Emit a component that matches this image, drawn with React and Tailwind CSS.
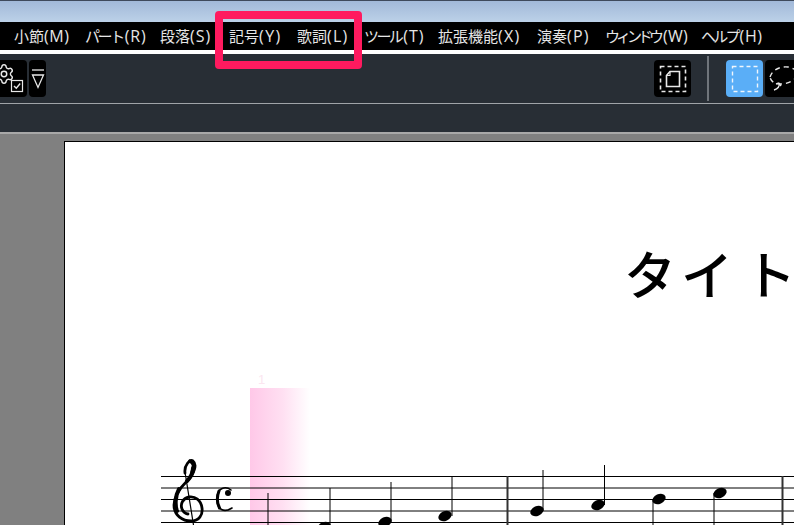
import React from "react";
import { Settings } from "lucide-react";

const menus = [
  ["小節", "", "tracking-[0.6px]", "(M)", "w-[71px]"],
  ["パート", "tracking-[-2.4px]", "pl-[2px] tracking-[0.8px]", "(R)", "w-[75px]"],
  ["段落", "", "tracking-[1px]", "(S)", "w-[69px]"],
  ["記号", "", "tracking-[1.4px]", "(Y)", "w-[68px]"],
  ["歌詞", "", "tracking-[1.2px]", "(L)", "w-[67px]"],
  ["ツール", "tracking-[-2.6px]", "pl-[2px] tracking-[1px]", "(T)", "w-[74px]"],
  ["拡張機能", "", "tracking-[1.2px]", "(X)", "w-[99px]"],
  ["演奏", "", "tracking-[1.2px]", "(P)", "w-[68px]"],
  ["ウィンドウ", "tracking-[-4px]", "pl-[3px] tracking-[0.3px]", "(W)", "w-[96px]"],
  ["ヘルプ", "tracking-[-2.8px]", "pl-[2px] tracking-[0.6px]", "(H)", "w-[70px]"],
];

function Score() {
  const lines = [476.5, 488, 499.5, 511, 522.5];
  const heads = [
    [324, 527],
    [385, 522],
    [445, 516],
    [537, 511],
    [598, 505],
    [659, 499],
    [720, 493],
  ];
  const stems = [
    [268, 493, 525],
    [330, 488, 525],
    [391, 482, 522],
    [452, 476, 516],
    [543, 470, 511],
    [604.5, 465, 505],
    [653, 499, 525],
    [714, 493, 525],
  ];
  return (
    <svg width="633" height="155" viewBox="161 370 633 155" className="block">
      <defs>
        <linearGradient id="pink" x1="0" x2="1" y1="0" y2="0">
          <stop offset="0" stopColor="#ffc8e8" />
          <stop offset="0.55" stopColor="#ffe0f2" />
          <stop offset="1" stopColor="#ffffff" />
        </linearGradient>
      </defs>
      <rect x="250" y="388" width="60" height="137" fill="url(#pink)" />
      <text x="258" y="384" fontSize="13" fill="#fbe6f0" fontFamily="Liberation Sans, sans-serif">1</text>
      {lines.map((y) => (
        <line key={y} x1="161" x2="794" y1={y} y2={y} stroke="#000" strokeWidth="1" />
      ))}
      <line x1="507.5" x2="507.5" y1="476" y2="525" stroke="#333" strokeWidth="2" />
      <line x1="782.5" x2="782.5" y1="476" y2="525" stroke="#333" strokeWidth="2" />
      {stems.map(([x, a, b]) => (
        <line key={x} x1={x} x2={x} y1={a} y2={b} stroke="#000" strokeWidth="1" />
      ))}
      {heads.map(([x, y]) => (
        <ellipse key={x} cx={x} cy={y} rx="7" ry="4.8" transform={`rotate(-24 ${x} ${y})`} fill="#000" />
      ))}
      <g fill="none" stroke="#000" strokeLinecap="round">
        <path d="M185 472 L193.5 525" strokeWidth="1.2" />
        <path d="M185 473 C184 465 190 459 193 461 C197 464 195 473 187 481 C179 489 174 496 174 505 C174 516 183 521 191 521 C199 521 203 515 202 508 C201 500 195 496 189 497 C183 498 180 504 182 509 C183 512 186 514 188 514" strokeWidth="2.8" />
        <path d="M179 489 C175 496 175 506 177 511" strokeWidth="4" />
        <path d="M187 481 C191 477 193 472 193 468" strokeWidth="4" />
        <path d="M190 461 C194 463 194 468 192 472" strokeWidth="3.4" />
        <path d="M231 490 C226 486 217 487 217 499 C217 510 224 513 232 508" strokeWidth="1.6" />
        <path d="M219 491 C217 496 217 503 219.5 508" strokeWidth="3" />
      </g>
      <circle cx="228" cy="493" r="3" fill="#000" />
    </svg>
  );
}

export default function App() {
  return (
    <div className="w-[794px] h-[525px] overflow-hidden flex flex-col bg-[#808080] relative" style={{ fontFamily: '"Noto Sans CJK JP", "Noto Sans", sans-serif' }}>
      <div className="h-[22px] shrink-0 border-t border-[#3f4a5c] bg-gradient-to-b from-[#a2b9d9] to-[#bcd1e8]" />
      <div className="h-[28px] shrink-0 bg-black flex items-center pl-[14px] text-[15px] text-[#e6e6e6] whitespace-nowrap">
        {menus.map(([m, t, p, l, w]) => (
          <span key={m} className={w}>
            <span className={t}>{m}</span>
            <span className={`text-[16px] ${p}`} style={{ fontFamily: '"Open Sans", sans-serif' }}>{l}</span>
          </span>
        ))}
      </div>
      <div className="h-[4px] shrink-0 bg-white" />
      <div className="h-[49px] shrink-0 bg-[#282e35] flex items-center">
        <div className="w-[27px] h-[37px] bg-black rounded-r-[4px] relative overflow-hidden text-[#e8e8e8]">
          <Settings size={22} strokeWidth={1.6} className="absolute left-[-7px] top-[3px]" />
          <svg width="14" height="14" viewBox="0 0 14 14" className="absolute left-[10px] top-[19px]" fill="none" stroke="currentColor">
            <rect x="1.5" y="1.5" width="11" height="11" strokeWidth="1.2" />
            <path d="M4 7l2.3 2.3L10.2 4.5" strokeWidth="1.4" />
          </svg>
        </div>
        <div className="w-[17px] h-[37px] ml-[2px] bg-black rounded-[4px] flex items-center justify-center">
          <svg width="14" height="22" viewBox="0 0 14 22" fill="none" stroke="#e8e8e8" strokeWidth="1.3">
            <path d="M1 2h12" />
            <path d="M1.5 7h11L7 19.5z" />
          </svg>
        </div>
        <div className="ml-auto w-[37px] h-[37px] bg-black rounded-[4px] flex items-center justify-center">
          <svg width="28" height="32" viewBox="0 0 28 32" fill="none" stroke="#e8e8e8">
            <rect x="1.5" y="3.5" width="25" height="25" strokeWidth="1.6" strokeDasharray="4 3" />
            <path d="M7.5 12.5l3.5-4h9.5v15h-13z" strokeWidth="1.6" />
            <path d="M11 8.5v4H7.5" strokeWidth="1.2" />
          </svg>
        </div>
        <div className="ml-[16px] w-[2px] h-[45px] bg-[#70757b]" />
        <div className="ml-[17px] w-[37px] h-[37px] bg-[#5aaef7] rounded-[4px] flex items-center justify-center shrink-0">
          <svg width="28" height="32" viewBox="0 0 28 32" fill="none" stroke="#f0f6fc">
            <rect x="1.5" y="3.5" width="25" height="25" strokeWidth="1.4" strokeDasharray="4 3" />
          </svg>
        </div>
        <div className="ml-[2px] mr-[-8px] w-[37px] h-[37px] bg-black rounded-[4px] shrink-0 flex items-center justify-center">
          <svg width="34" height="32" viewBox="0 0 34 32" fill="none" stroke="#e8e8e8" strokeWidth="1.4">
            <path d="M3 14C5 7 13 3 21 4c7 1 11 5 8 10-2 4-9 7-15 7-6 0-10-2-11-7" strokeDasharray="5 4" />
            <path d="M12 20c1 3-1 6-5 7M12 20l-3 1M12 20l2 3" />
          </svg>
        </div>
      </div>
      <div className="h-[1px] shrink-0 bg-[#a0a4a8]" />
      <div className="h-[28px] shrink-0 bg-[#282e35]" />
      <div className="h-[2px] shrink-0 bg-[#a8a8a8]" />
      <div className="flex-1 min-h-0 pl-[64px] pt-[7px]">
        <div className="h-[500px] bg-white border-l border-t border-black">
          <div className="h-[228px] pt-[95px] pl-[559px] text-[52px] leading-[72px] font-medium text-black whitespace-nowrap" style={{ fontFamily: '"Noto Sans CJK JP", sans-serif' }}>
            <span className="tracking-[5px]">タイ</span><span className="ml-[6px]">ト</span>
          </div>
          <div className="ml-[96px]">
            <Score />
          </div>
        </div>
      </div>
      <div className="absolute left-[215px] top-[11px] w-[147px] h-[58px] border-[8px] border-[#ff1a5f] rounded-[4px]" />
    </div>
  );
}
